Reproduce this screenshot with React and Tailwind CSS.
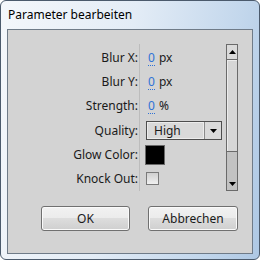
import React from 'react';

const font = { fontFamily: '"Noto Sans", "Segoe UI", Arial, sans-serif' };

const rows = [
  { label: 'Blur X:', kind: 'num', unit: 'px' },
  { label: 'Blur Y:', kind: 'num', unit: 'px' },
  { label: 'Strength:', kind: 'num', unit: '%' },
  { label: 'Quality:', kind: 'select' },
  { label: 'Glow Color:', kind: 'color' },
  { label: 'Knock Out:', kind: 'check' },
];

const Tri = ({ down }) => (
  <svg width="7" height="4" viewBox="0 0 7 4" className="block">
    <polygon points={down ? '0,0 7,0 3.5,4' : '0,4 7,4 3.5,0'} fill="#000" />
  </svg>
);

function Value({ row }) {
  if (row.kind === 'num') {
    return (
      <div className="pl-[8px] flex items-center text-[12px] text-[#1a1a1a]">
        <span className="text-[#2f72d6] border-b border-dotted border-[#2f72d6] leading-[14px]">0</span>
        <span className="ml-[4px]">{row.unit}</span>
      </div>
    );
  }
  if (row.kind === 'select') {
    return (
      <div className="ml-[6px] w-[76px] h-[19px] border border-[#4d4d4d] bg-[#d9d9d9] flex">
        <div className="flex-1 border border-[#ececec] pl-[6px] flex items-center text-[12px] text-[#1a1a1a]">High</div>
        <div className="w-[17px] border-l border-[#8a8a8a] flex items-center justify-center">
          <Tri down />
        </div>
      </div>
    );
  }
  if (row.kind === 'color') {
    return <div className="ml-[5px] w-[20px] h-[20px] border border-[#6a6a6a] bg-black" />;
  }
  return (
    <div className="ml-[6px] w-[13px] h-[13px] border border-[#7a7a7a] bg-[linear-gradient(#d0d0d0,#f0f0f0)]" />
  );
}

export default function App() {
  return (
    <div
      className="w-[260px] h-[260px] rounded-[6px] border border-[#4b5a6c] flex flex-col bg-[linear-gradient(100deg,#f4f7fb_0%,#e3ecf6_45%,#c3d7ec_80%,#aec8e4_100%)]"
      style={font}
    >
      <div className="h-[28px] px-[7px] flex items-center text-[12px] text-black">Parameter bearbeiten</div>
      <div className="mx-[6px] h-[225px] border border-[#6f7b88] bg-[#d3d3d3] flex flex-col">
        <div className="mt-[14px] mx-[14px] h-[147px] flex overflow-hidden">
          <div className="flex-1 flex pt-[2px]">
            <div className="w-[116px] flex flex-col">
              {rows.map((r) => (
                <div key={r.label} className="h-[25px] flex items-center justify-end text-[12px] text-[#1a1a1a]">
                  {r.label}
                </div>
              ))}
            </div>
            <div className="ml-[1px] w-px bg-[#bcbcbc] -mt-[2px]" />
            <div className="flex-1 flex flex-col">
              {rows.map((r) => (
                <div key={r.label} className="h-[25px] flex items-center">
                  <Value row={r} />
                </div>
              ))}
            </div>
          </div>
          <div className="w-[12px] border border-[#6a6a6a] flex flex-col bg-[#c2c2c2]">
            <div className="h-[15px] border-b border-[#6a6a6a] bg-[#dadada] flex items-center justify-center">
              <Tri />
            </div>
            <div className="h-[92px] border-b border-[#6a6a6a] bg-[#d6d6d6] shadow-[inset_1px_1px_0_#ececec]" />
            <div className="flex-1 flex items-end justify-center pb-[4px]">
              <Tri down />
            </div>
          </div>
        </div>
        <div className="mt-[15px] pr-[14px] flex justify-end gap-[18px]">
          {[['OK', 'w-[89px]'], ['Abbrechen', 'w-[90px]']].map(([t, w]) => (
            <div
              key={t}
              className={`${w} h-[25px] rounded-[3px] border border-[#707070] shadow-[inset_0_0_0_1px_#fafafa] bg-[linear-gradient(#f2f2f2_0%,#ebebeb_50%,#dddddd_50%,#cfcfcf_100%)] flex items-center justify-center text-[12px] text-[#1a1a1a]`}
            >
              {t}
            </div>
          ))}
        </div>
      </div>
    </div>
  );
}
